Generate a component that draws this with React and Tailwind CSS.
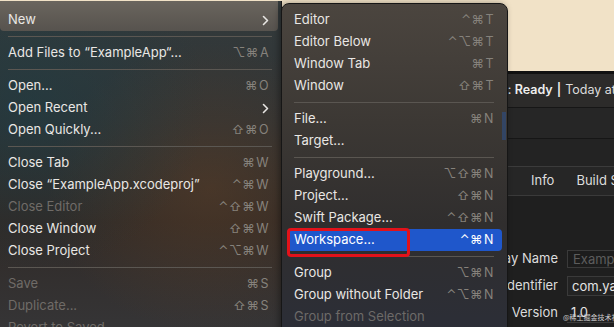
import React from 'react';

const FONT = "font-['Inter','DejaVu_Sans',sans-serif]";

const leftItems = [
  { label: 'New', sub: true, hover: true, first: true },
  { sep: true },
  { label: 'Add Files to “ExampleApp“...', keys: '⌥⌘', key: 'A' },
  { sep: true },
  { label: 'Open...', keys: '⌘', key: 'O' },
  { label: 'Open Recent', sub: true },
  { label: 'Open Quickly...', keys: '⇧⌘', key: 'O' },
  { sep: true },
  { label: 'Close Tab', keys: '⌘', key: 'W' },
  { label: 'Close “ExampleApp.xcodeproj”', keys: '⌃⌘', key: 'W' },
  { label: 'Close Editor', keys: '⌃⇧⌘', key: 'W', disabled: true },
  { label: 'Close Window', keys: '⇧⌘', key: 'W' },
  { label: 'Close Project', keys: '⌃⌥⌘', key: 'W' },
  { sep: true },
  { label: 'Save', keys: '⌘', key: 'S', disabled: true },
  { label: 'Duplicate...', keys: '⇧⌘', key: 'S', disabled: true },
  { label: 'Revert to Saved', disabled: true },
];

const subItems = [
  { label: 'Editor', keys: '⌃⌘', key: 'T' },
  { label: 'Editor Below', keys: '⌃⌥⌘', key: 'T' },
  { label: 'Window Tab', keys: '⌘', key: 'T' },
  { label: 'Window', keys: '⇧⌘', key: 'T' },
  { sep: true },
  { label: 'File...', keys: '⌘', key: 'N' },
  { label: 'Target...' },
  { sep: true },
  { label: 'Playground...', keys: '⌥⇧⌘', key: 'N' },
  { label: 'Project...', keys: '⇧⌘', key: 'N' },
  { label: 'Swift Package...', keys: '⌃⇧⌘', key: 'N' },
  { label: 'Workspace...', keys: '⌃⌘', key: 'N', active: true },
  { sep: true },
  { label: 'Group', keys: '⌥⌘', key: 'N' },
  { label: 'Group without Folder', keys: '⌃⌥⌘', key: 'N' },
  { label: 'Group from Selection', disabled: true },
];

function Chevron() {
  return (
    <svg width="7" height="11" viewBox="0 0 7 11" className="text-[#e8e6e3]">
      <path d="M1.5 1.5 L5.5 5.5 L1.5 9.5" fill="none" stroke="currentColor" strokeWidth="1.6" strokeLinecap="round" strokeLinejoin="round" />
    </svg>
  );
}

function Shortcut({ keys, k, active }) {
  return (
    <span className={`flex items-center text-[12.5px] tracking-[0.5px] ${active ? 'text-white' : 'text-[#86827c]'}`}>
      <span>{keys}</span>
      <span className="ml-[1px]">{k}</span>
    </span>
  );
}

function LeftMenu() {
  return (
    <div className="absolute left-0 top-[1px] w-[281px] h-[340px] bg-[linear-gradient(180deg,#343b3c_0%,#2f3335_35%,#302a27_65%,#363638_100%)] shadow-[1px_0_0_#1a1a1a]">
      <div className="absolute inset-0 bg-[radial-gradient(ellipse_at_75%_55%,rgba(96,64,38,0.5),transparent_55%)]" />
      <div className="absolute inset-0 bg-[radial-gradient(ellipse_at_10%_30%,rgba(28,62,70,0.5),transparent_50%)]" />
      <div className="relative flex flex-col">
        {leftItems.map((it, i) =>
          it.sep ? (
            <div key={i} className="h-[11px] flex items-center pl-[8px] pr-[9px]">
              <div className="h-px w-full bg-[#5b5752]" />
            </div>
          ) : (
            <div
              key={i}
              className={`flex items-center justify-between pl-[8px] ${
                it.first ? 'h-[30px] pt-[8px] mr-[3px] pr-[9px] rounded-b-[4px] bg-[linear-gradient(180deg,#6a655e,#57534e)]' : 'h-[22px] pr-[12px]'
              }`}
            >
              <span className={`text-[13px] ${it.disabled ? 'text-[#6f6b67]' : 'text-[#e9e7e4]'}`}>{it.label}</span>
              {it.sub ? <Chevron /> : it.keys ? <Shortcut keys={it.keys} k={it.key} /> : null}
            </div>
          )
        )}
      </div>
    </div>
  );
}

function SubMenu() {
  return (
    <div className="absolute left-[281px] top-[3px] w-[227px] h-[340px] rounded-t-[8px] border border-[#161616] bg-[linear-gradient(180deg,#4b453f_0%,#3c3834_35%,#302e2e_65%,#2b2e38_100%)] shadow-[-2px_0_6px_rgba(0,0,0,0.35)]">
      <div className="absolute right-[1px] top-[108px] w-[4px] h-[28px] bg-[#2d4f86] opacity-60" />
      <div className="relative flex flex-col pt-[5px]">
        {subItems.map((it, i) =>
          it.sep ? (
            <div key={i} className="h-[11px] flex items-center pl-[12px] pr-[13px]">
              <div className="h-px w-full bg-[#5a5651]" />
            </div>
          ) : (
            <div
              key={i}
              className={`h-[22px] mx-[5px] flex items-center justify-between pl-[7px] pr-[8px] rounded-[4px] ${
                it.active ? 'bg-[#1f57cb]' : ''
              }`}
            >
              <span className={`text-[13px] ${it.disabled ? 'text-[#6d6a68]' : it.active ? 'text-white' : 'text-[#e9e7e4]'}`}>
                {it.label}
              </span>
              {it.keys ? <Shortcut keys={it.keys} k={it.key} active={it.active} /> : null}
            </div>
          )
        )}
      </div>
    </div>
  );
}

function XcodeWindow() {
  return (
    <div className="flex flex-col h-full pt-[71px]">
      <div className="flex-1 flex flex-col bg-[#1f1f1f] border-t-[3px] border-[#111111]">
        <div className="h-[33px] flex items-center bg-[#2c2b2a] text-[12.5px] text-[#dcdcdc] pl-[500px] whitespace-nowrap">
          <span>p:&nbsp;</span>
          <span className="font-semibold text-[#eeeeee]">Ready</span>
          <span className="mx-[4px] font-semibold text-[#eeeeee]">|</span>
          <span>Today at 10:24</span>
        </div>
        <div className="h-[32px] bg-[#262626] border-t border-[#161616] border-b border-[#3a3a3a]" />
        <div className="h-[28px] bg-[#232323] border-b border-[#3b3b3b]" />
        <div className="h-[29px] flex items-center bg-[#262626] border-b border-[#3a3a3a] text-[13px] text-[#dddddd] pl-[531px] gap-[22px] whitespace-nowrap">
          <span>Info</span>
          <span>Build Settings</span>
        </div>
        <div className="flex-1 flex flex-col pt-[53px] gap-[7px] text-[13px] text-[#dcdcdc] whitespace-nowrap">
          <div className="flex items-center h-[20px]">
            <span className="w-[558px] shrink-0 text-right">Display Name</span>
            <div className="ml-[9px] w-[70px] shrink-0 h-[18px] border border-[#3a3a3a] bg-[#1c1c1c] pl-[5px] text-[#5c5c5c] leading-[16px]">ExampleApp</div>
          </div>
          <div className="flex items-center h-[20px]">
            <span className="w-[558px] shrink-0 text-right">Identifier</span>
            <div className="ml-[9px] w-[70px] shrink-0 h-[20px] border border-[#3a3a3a] bg-[#232323] pl-[4px] text-[#e4e4e4] leading-[18px]">com.yanglu</div>
          </div>
          <div className="flex items-center h-[20px]">
            <span className="w-[558px] shrink-0 text-right">Version</span>
            <div className="relative ml-[9px] w-[70px] shrink-0 h-[20px] pl-[4px] text-[#e4e4e4] leading-[18px] border-b border-[#3a3a3a]">
              1.0
              <span className="absolute left-[-4px] top-[5px] text-[7px] text-[#cfcfcf] font-['Noto_Sans_CJK_SC',sans-serif]">@稀土掘金技术社区</span>
            </div>
          </div>
        </div>
      </div>
    </div>
  );
}

export default function App() {
  return (
    <div className={`relative w-[614px] h-[327px] overflow-hidden bg-[#f1e2c7] ${FONT}`}>
      <XcodeWindow />
      <LeftMenu />
      <SubMenu />
      <div className="absolute left-[287px] top-[228px] w-[123px] h-[29px] rounded-[4px] border-[3px] border-[#e2121a]" />
    </div>
  );
}
